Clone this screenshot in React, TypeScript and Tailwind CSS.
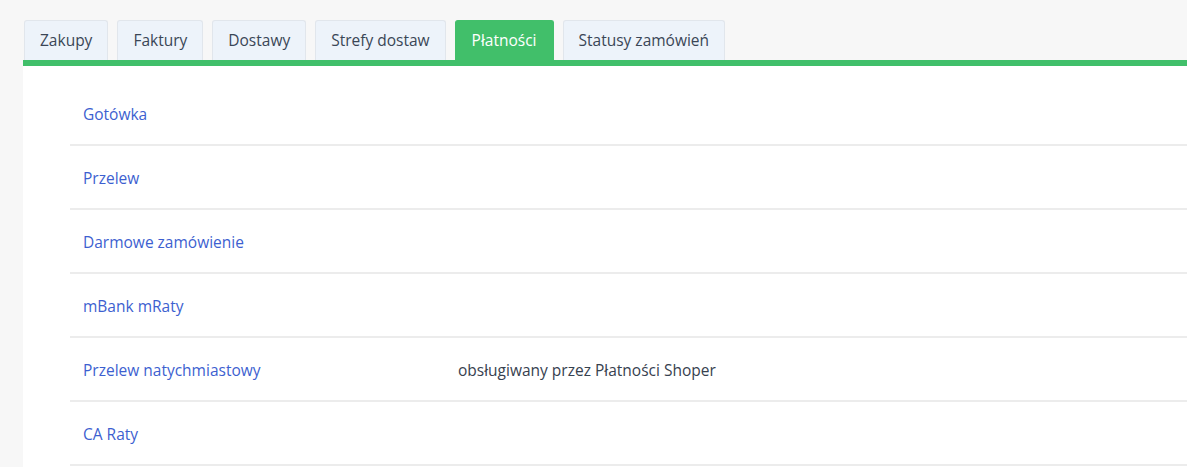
import React from "react";

const tabs = ["Zakupy", "Faktury", "Dostawy", "Strefy dostaw", "Płatności", "Statusy zamówień"];
const rows: [string, string][] = [
  ["Gotówka", ""],
  ["Przelew", ""],
  ["Darmowe zamówienie", ""],
  ["mBank mRaty", ""],
  ["Przelew natychmiastowy", "obsługiwany przez Płatności Shoper"],
  ["CA Raty", ""],
];

export default function App() {
  return (
    <div
      className="w-[1187px] h-[467px] overflow-hidden bg-[#f7f7f7] pt-[20px] pl-[23px]"
      style={{ fontFamily: '"Open Sans", "Noto Sans", sans-serif' }}
    >
      <div className="flex gap-[9px] pl-[1px] h-[40px] items-end">
        {tabs.map((t) => {
          const active = t === "Płatności";
          return (
            <div
              key={t}
              className={
                active
                  ? "h-[40px] px-[16px] flex items-center rounded-t-[3px] bg-[#41bf6a] border border-[#41bf6a] border-b-0 text-white text-[15.5px]"
                  : "h-[40px] px-[15px] flex items-center rounded-t-[3px] bg-[#edf3fa] border border-[#e1e6ec] border-b-0 text-[#3a4656] text-[15.5px]"
              }
            >
              {t}
            </div>
          );
        })}
      </div>
      <div className="h-[6px] bg-[#41bf6a]" />
      <div className="bg-white h-[500px] pt-[16px] pl-[47px]">
        {rows.map(([a, b]) => (
          <div key={a} className="h-[64px] flex items-center border-b-2 border-[#ececec] text-[15.5px] pt-[3px]">
            <div className="w-[388px] pl-[13px] text-[#3d5fd0]">{a}</div>
            <div className="text-[#37414f]">{b}</div>
          </div>
        ))}
      </div>
    </div>
  );
}
